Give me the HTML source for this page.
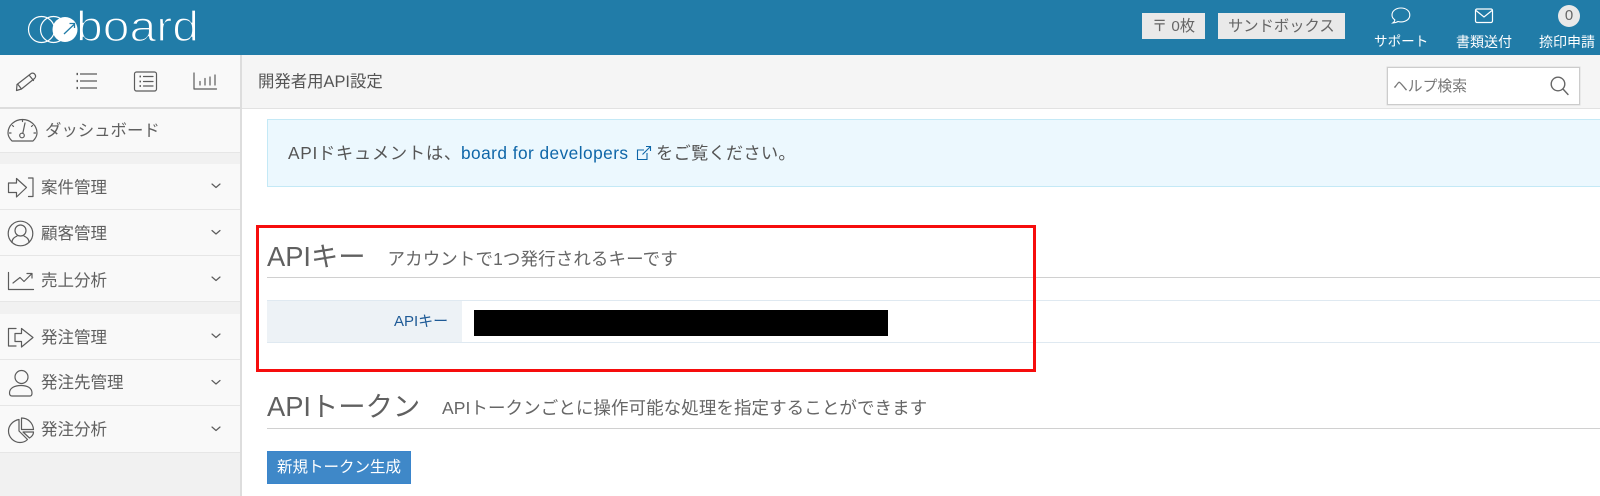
<!DOCTYPE html>
<html lang="ja">
<head>
<meta charset="utf-8">
<title>開発者用API設定</title>
<style>
html,body{margin:0;padding:0;background:#fff}
body{width:1600px;height:496px;overflow:hidden;position:relative;font-family:"Liberation Sans","Noto Sans CJK JP",sans-serif;color:#5a5a5a}
.b{position:absolute}
.t{position:absolute;white-space:nowrap;line-height:24px;height:24px}
.s{font-size:16.5px;left:41px;color:#606060}
.r{position:absolute;left:0;width:240px;background:#f9f9f9;border-bottom:1px solid #e6e6e6;box-sizing:border-box}
svg{position:absolute;overflow:visible}
.i{fill:none;stroke:#5c5c5c;stroke-width:1.2;stroke-linecap:round;stroke-linejoin:round}
</style>
</head>
<body>
<div class="b" style="left:0;top:0;width:1600px;height:55px;background:#217ca8"></div>

<svg style="left:0;top:0" width="210" height="55">
  <g fill="none" stroke="#fff" stroke-width="1.2">
    <circle cx="41.500" cy="29.500" r="13"/>
    <circle cx="53.500" cy="29.500" r="13"/>
  </g>
  <circle cx="65" cy="29.500" r="12.500" fill="#fff"/>
  <path d="M64 34L74 24.500M69.500 23.500L74.500 23.500L74.500 28" fill="none" stroke="#217ca8" stroke-width="1.300"/>
  <text x="76" y="41" font-family="Liberation Sans" font-size="43" textLength="123" lengthAdjust="spacingAndGlyphs" fill="#fff" stroke="#217ca8" stroke-width="1.300">board</text>
</svg>

<div class="b" style="left:1142px;top:13px;width:63px;height:26px;background:#e9e9e9"></div>
<div class="t" style="left:1152px;top:15px;font-size:15.200px;color:#666">〒 0枚</div>
<div class="b" style="left:1218px;top:13px;width:127px;height:26px;background:#e9e9e9"></div>
<div class="t" style="left:1228px;top:15px;font-size:15.300px;color:#666">サンドボックス</div>

<svg style="left:1390px;top:6px" width="22" height="20" fill="none" stroke="#fff" stroke-width="1.100"><path d="M11 2C5.800 2 2 5 2 9C2 11.200 3.200 12.800 4.800 13.800C4.800 15 4 16.200 2.800 17C5 17 7 16.200 8 15.500C9 15.800 10 15.900 11 15.900C16.200 15.900 19.800 13 19.800 9C19.800 5 16.200 2 11 2Z"/></svg>
<div class="t" style="left:1374px;top:30px;font-size:13.600px;color:#fff">サポート</div>

<svg style="left:1474px;top:8px" width="20" height="16" fill="none" stroke="#fff" stroke-width="1.200"><rect x="1.500" y="1" width="17" height="13.500" rx="1.500"/><path d="M2 2.500L10 9L18 2.500"/></svg>
<div class="t" style="left:1456px;top:30px;font-size:14px;color:#fff">書類送付</div>

<div class="b" style="left:1558px;top:5px;width:22px;height:22px;border-radius:50%;background:#e9e9e9;color:#666;font-size:15px;line-height:22px;text-align:center">0</div>
<div class="t" style="left:1539px;top:30px;font-size:14px;color:#fff">捺印申請</div>

<div class="b" style="left:0;top:55px;width:242px;height:441px;background:#f1f1f1;border-right:2px solid #ddd;box-sizing:border-box"></div>
<div class="r" style="top:55px;height:54px;border-bottom:2px solid #ddd"></div>
<div class="r" style="top:109px;height:44px"></div>
<div class="r" style="top:164px;height:46px"></div>
<div class="r" style="top:210px;height:46px"></div>
<div class="r" style="top:256px;height:46px"></div>
<div class="r" style="top:314px;height:46px"></div>
<div class="r" style="top:360px;height:46px"></div>
<div class="r" style="top:406px;height:47px"></div>

<svg style="left:0;top:0" width="240" height="496" class="i">
  <!-- pencil -->
  <path d="M17 84.500L30.500 74C32 72.500 34 73 35 74.500C36 76 35.500 77.500 34.500 78.500L21.500 89L16.500 90.500Z M29 75L33.500 80.500 M18 84.500L21.500 89"/>
  <!-- list -->
  <path d="M80 74H97M80 81H97M80 88H97" stroke-width="1.300" stroke-linecap="butt"/>
  <path d="M76.500 74H78M76.500 81H78M76.500 88H78" stroke-width="2.200" stroke-linecap="butt"/>
  <!-- boxed list -->
  <rect x="134.500" y="72" width="22" height="19" rx="2"/>
  <path d="M143.500 76.500H153M143.500 81.500H153M143.500 86H153"/>
  <path d="M139.500 76.500H141M139.500 81.500H141M139.500 86H141" stroke-width="1.800" stroke-linecap="butt"/>
  <!-- bars -->
  <path d="M194 73V89H216.500M200 81.500V85M205 78.500V85M210 77V85M215 75V85"/>
  <!-- gauge -->
  <path d="M12 141H33C35.500 138.500 37 135.500 37 133C37 125.500 30.500 119.500 22.500 119.500C14.500 119.500 8 125.500 8 133C8 135.500 9.500 138.500 12 141Z"/>
  <circle cx="22" cy="135.500" r="2.300"/>
  <path d="M22.800 133.300L25 123M12.500 125.500L13.500 126.500M32.500 125.500L31.500 126.500M9.500 133H11M35.500 133H34M22.500 120V121.500"/>
  <!-- arrow in -->
  <path d="M8.500 183H16.500V178.500L26.500 187.500L16.500 197V192.500H8.500Z"/>
  <path d="M28.500 178H33V196.500H28.500"/>
  <!-- person circle -->
  <circle cx="20.500" cy="233.500" r="12.300"/>
  <circle cx="20.500" cy="230.500" r="5.500"/>
  <path d="M12 242.500C12 238 15.500 237 17 236M29 242.500C29 238 25.500 237 24 236"/>
  <!-- trend -->
  <path d="M8.500 272.500V289.500H33.500M13 283L20 277.500L24 281.500L31.500 274M27 273.500H32V278"/>
  <!-- export -->
  <path d="M16 328.500H8.500V346H16"/>
  <path d="M15 333.500H21.500V328.500L33 337.500L21.500 347V341.500H15Z"/>
  <!-- person -->
  <circle cx="21.500" cy="377" r="6.500"/>
  <path d="M12 396H30C31.500 396 32 395 32 393C32 388 27.500 385.500 21 385.500C14.500 385.500 9.500 388 9.500 393C9.500 395 10.500 396 12 396Z"/>
  <!-- pie -->
  <path d="M19 419.500C13 420.500 8.500 425.500 8.500 431C8.500 437.500 14 442.500 20 442.500C23 442.500 25.500 441.500 27.500 439.500L19 431Z"/>
  <path d="M21.500 418C28 418 33 423 33.500 429.500H21.500Z"/>
  <path d="M23 432H33.500C33.500 434.500 32 436.500 29.500 438Z"/>
  <!-- chevrons -->
  <g stroke-width="1.200">
    <path d="M212 184L216 187.500L220 184"/>
    <path d="M212 230.500L216 234L220 230.500"/>
    <path d="M212 277L216 280.500L220 277"/>
    <path d="M212 334L216 337.500L220 334"/>
    <path d="M212 380.500L216 384L220 380.500"/>
    <path d="M212 427L216 430.500L220 427"/>
  </g>
</svg>

<div class="t s" style="left:45px;top:119px;font-size:16.400px">ダッシュボード</div>
<div class="t s" style="top:176px">案件管理</div>
<div class="t s" style="top:222px">顧客管理</div>
<div class="t s" style="top:269px">売上分析</div>
<div class="t s" style="top:326px">発注管理</div>
<div class="t s" style="top:371px">発注先管理</div>
<div class="t s" style="top:418px">発注分析</div>

<div class="b" style="left:242px;top:55px;width:1358px;height:54px;background:#f5f5f5;border-bottom:1px solid #e2e2e2;box-sizing:border-box"></div>
<div class="t" style="left:258px;top:70px;font-size:16.400px;color:#555">開発者用API設定</div>

<div class="b" style="left:1387px;top:67px;width:193px;height:38px;background:#fff;border:1px solid #ccc;box-sizing:border-box;box-shadow:0 0 0 .5px #ddd"></div>
<div class="t" style="left:1393px;top:75px;font-size:14.800px;color:#777">ヘルプ検索</div>
<svg style="left:1550px;top:76px" width="20" height="20" fill="none" stroke="#666" stroke-width="1.400"><circle cx="8" cy="8" r="6.800"/><path d="M13 13L18 18.500" stroke-linecap="round"/></svg>

<div class="b" style="left:267px;top:119px;width:1333px;height:68px;background:#ecf8fe;border:1px solid #c4e9f6;border-right:0;box-sizing:border-box"></div>
<div class="t" style="left:288px;top:141px;font-size:17.300px;color:#555;letter-spacing:.7px">APIドキュメントは、</div>
<div class="t" style="left:461px;top:141px;font-size:17.300px;color:#0e66a8;letter-spacing:.45px">board for developers</div>
<svg style="left:636px;top:145px" width="16" height="16" fill="none" stroke="#0e66a8" stroke-width="1.100"><path d="M11 8V14.500H1.500V5H8M6.500 9.500L14.500 1.500M10 1.500H14.500V6"/></svg>
<div class="t" style="left:656px;top:141px;font-size:17.300px;color:#555;letter-spacing:.2px">をご覧ください。</div>

<div class="t" style="left:267px;top:240px;height:34px;line-height:34px;font-size:27.300px;color:#606060">APIキー</div>
<div class="t" style="left:387.500px;top:247px;font-size:17.500px;color:#666;letter-spacing:.1px">アカウントで1つ発行されるキーです</div>
<div class="b" style="left:267px;top:277px;width:1333px;height:1px;background:#d0d0d0"></div>

<div class="b" style="left:267px;top:300px;width:1333px;height:43px;border-top:1px solid #dfe9f1;border-bottom:1px solid #dfe9f1;box-sizing:border-box"></div>
<div class="b" style="left:267px;top:301px;width:195px;height:41px;background:#edf2f6"></div>
<div class="t" style="left:394px;top:310px;font-size:15px;color:#1e5a96">APIキー</div>
<div class="b" style="left:474px;top:310px;width:414px;height:26px;background:#000"></div>

<div class="b" style="left:256px;top:225px;width:780px;height:147px;border:3px solid #f60d0d;box-sizing:border-box"></div>

<div class="t" style="left:267px;top:390px;height:34px;line-height:34px;font-size:27.300px;color:#606060">APIトークン</div>
<div class="t" style="left:442px;top:396px;font-size:17.500px;color:#666;letter-spacing:.07px">APIトークンごとに操作可能な処理を指定することができます</div>
<div class="b" style="left:267px;top:428px;width:1333px;height:1px;background:#d0d0d0"></div>

<div class="b" style="left:267px;top:451px;width:144px;height:33px;background:#3f88c8;border:1px solid #3a85cc;box-sizing:border-box"></div>
<div class="t" style="left:277px;top:456px;font-size:15.500px;color:#fff">新規トークン生成</div>
</body>
</html>
